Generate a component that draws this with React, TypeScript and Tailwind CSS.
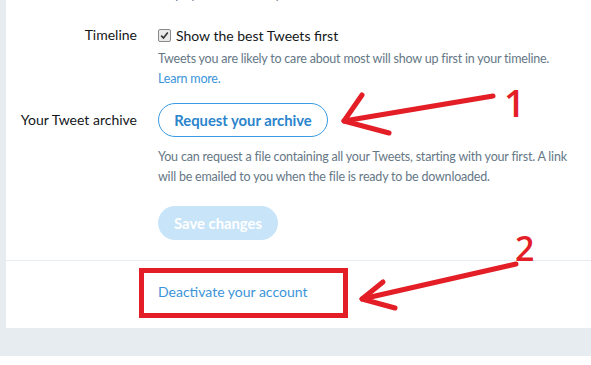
export default function App() {
  const red = "#e31e26";
  return (
    <div className="relative w-[591px] h-[365px] overflow-hidden bg-white [font-family:Lato,sans-serif]">
      <div className="flex h-[328px]">
        <div className="w-[6px] shrink-0 bg-[#e6ecf0]" />
        <div className="flex-1 flex flex-col bg-white overflow-hidden">
          <div className="mt-[-15px] pl-[152px] text-[12.5px] tracking-[-0.2px] leading-[20px] text-[#657786] whitespace-nowrap">
            Display media that may contain sensitive content
          </div>

          <div className="flex mt-[20px]">
            <div className="w-[131px] shrink-0 text-right text-[14px] leading-[20px] text-[#14171a]">Timeline</div>
            <div className="ml-[21px] flex flex-col">
              <div className="flex items-center h-[20px]">
                <div className="w-[13px] h-[13px] border border-[#8a8a8a] bg-[#e9e9e9] rounded-[2px] flex items-center justify-center">
                  <svg width="9" height="9" viewBox="0 0 9 9">
                    <path d="M1.2 4.6 L3.5 7 L7.8 1.6" fill="none" stroke="#333" strokeWidth="1.6" />
                  </svg>
                </div>
                <span className="ml-[5px] text-[14px] text-[#14171a]">Show the best Tweets first</span>
              </div>
              <p className="mt-[4px] text-[12.5px] tracking-[-0.2px] leading-[20px] text-[#657786] whitespace-nowrap">
                Tweets you are likely to care about most will show up first in your timeline.
              </p>
              <a className="text-[12.5px] tracking-[-0.2px] leading-[20px] text-[#3b94d9]">Learn more.</a>
            </div>
          </div>

          <div className="flex mt-[14px]">
            <div className="w-[131px] shrink-0 text-right text-[14px] leading-[34px] text-[#14171a] whitespace-nowrap">Your Tweet archive</div>
            <div className="ml-[21px] flex flex-col items-start">
              <button className="h-[34px] w-[170px] rounded-full border border-[#3a9be3] text-[14.8px] font-bold text-[#2b84cc] flex items-center justify-center">
                Request your archive
              </button>
              <p className="mt-[10px] text-[12.5px] tracking-[-0.2px] leading-[20px] text-[#657786] whitespace-nowrap">
                You can request a file containing all your Tweets, starting with your first. A link
                <br />
                will be emailed to you when the file is ready to be downloaded.
              </p>
              <button className="mt-[19px] h-[34px] w-[120px] rounded-full bg-[#c8e4f8] text-[14.8px] font-bold text-white flex items-center justify-center">
                Save changes
              </button>
            </div>
          </div>

          <div className="mt-[20px] border-t border-[#e6ecf0]" />
          <div className="mt-[21px] pl-[152px] text-[14px] leading-[20px] text-[#3b94d9]">Deactivate your account</div>
        </div>
      </div>
      <div className="h-[28px] bg-[#e6ecf0]" />

      <div className="absolute left-[139px] top-[268px] w-[209px] h-[50px] border-[5px] border-[#e31e26]" />
      <svg className="absolute left-0 top-0 pointer-events-none" width="591" height="365" viewBox="0 0 591 365">
        <g fill="none" stroke={red} strokeWidth="5" strokeLinecap="round" strokeLinejoin="round">
          <path d="M493 96 L344 121" />
          <path d="M362 95 L344 121 L389 133" />
          <path d="M516 264 L362 299" />
          <path d="M383 282 L362 299 L395 308" />
        </g>
      </svg>
      <div className="absolute left-[504px] top-[84px] text-[37px] font-semibold leading-none text-[#e31e26] [font-family:'Open_Sans',sans-serif]">1</div>
      <div className="absolute left-[515px] top-[231px] text-[34px] font-semibold leading-none text-[#e31e26] [font-family:'Open_Sans',sans-serif]">2</div>
    </div>
  );
}
